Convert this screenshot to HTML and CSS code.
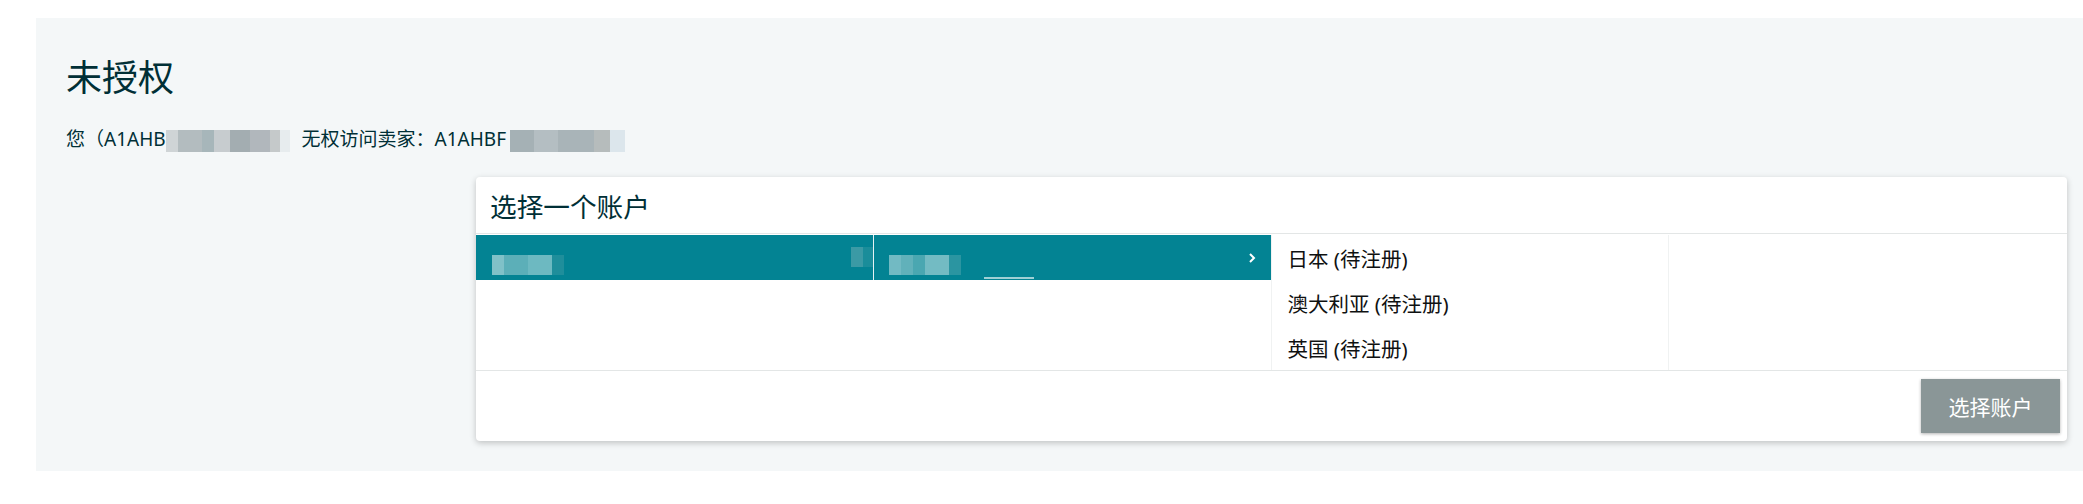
FILE: index.html
```html
<!DOCTYPE html>
<html lang="zh-CN">
<head>
    <meta charset="UTF-8">
    <meta name="viewport" content="width=device-width, initial-scale=1.0">
    <title>未授权</title>
    <link rel="stylesheet" href="styles.css">
</head>
<body>

    <div class="page">
        <h1 class="page-title">未授权</h1>
        <p class="page-desc">您（A1AHB<span class="blur blur-id"></span>无权访问卖家：A1AHBF<span class="blur blur-seller"></span></p>

        <div class="picker">
            <div class="picker-header">选择一个账户</div>

            <div class="picker-body">
                <div class="picker-col first">
                    <div class="picker-item selected">
                        <span class="blur-teal blur-account"></span>
                        <span class="blur-teal blur-edge"></span>
                    </div>
                </div>
                <div class="picker-col">
                    <div class="picker-item selected">
                        <span class="blur-teal blur-region"></span>
                        <span class="blur-line"></span>
                        <svg class="chevron" width="8" height="12" viewBox="0 0 8 12">
                            <polyline points="2,2 6,6 2,10" fill="none" stroke="#fff" stroke-width="2"/>
                        </svg>
                    </div>
                </div>
                <div class="picker-col">
                    <div class="picker-item">日本 (待注册)</div>
                    <div class="picker-item">澳大利亚 (待注册)</div>
                    <div class="picker-item">英国 (待注册)</div>
                </div>
                <div class="picker-col"></div>
            </div>

            <div class="picker-footer">
                <button class="select-button">选择账户</button>
            </div>
        </div>
    </div>

</body>
</html>
```

FILE: styles.css
```css
body {
    font-family: "Noto Sans", "Noto Sans CJK SC", sans-serif;
    margin: 0;
    padding: 0;
    background-color: #fff;
    color: #002f36;
}

.page {
    background-color: #f4f7f8;
    margin: 18px 0 0 36px;
    padding: 38px 16px 30px 30px;
}

.page-title {
    margin: 0;
    font-size: 36px;
    line-height: 44px;
    font-weight: 400;
    color: #002f36;
}

.page-desc {
    margin: 26px 0 0;
    font-size: 19px;
    line-height: 26px;
    color: #002f36;
    display: flex;
    align-items: center;
}

/* pixelated blur over account ids */
.blur {
    display: inline-block;
    height: 22px;
    margin-top: 4px;
}

.blur-id {
    width: 124px;
    margin-right: 12px;
    background: linear-gradient(90deg, #cfd4d6 0 12px, #b3bcbf 12px 36px, #a7b6ba 36px 48px, #c7cccf 48px 64px, #a3adb1 64px 84px, #b1b7bc 84px 104px, #c5c9ca 104px 114px, #e7ecee 114px 124px);
}

.blur-seller {
    width: 115px;
    margin-left: 4px;
    background: linear-gradient(90deg, #a5b1b5 0 24px, #b4bec2 24px 48px, #a9b4b8 48px 84px, #b6bcbc 84px 100px, #dce6ec 100px 115px);
}

.picker {
    margin: 25px 0 0 410px;
    background-color: #fff;
    border-radius: 4px;
    box-shadow: 0 2px 6px rgba(0, 0, 0, 0.22);
}

.picker-header {
    height: 56px;
    display: flex;
    align-items: center;
    padding-left: 14px;
    font-size: 26.67px;
    color: #002f36;
    border-bottom: 1px solid #e3e6e6;
}

.picker-body {
    display: grid;
    grid-template-columns: repeat(4, 1fr);
    height: 135px;
    margin-top: 1px;
    border-bottom: 1px solid #e3e6e6;
}

.picker-col {
    border-right: 1px solid #f0f2f2;
}

.picker-col.first {
    border-right: none;
}

.picker-col.first .picker-item {
    border-right: 1px solid #e6f2f3;
}

.picker-col:last-child {
    border-right: none;
}

.picker-item {
    height: 45px;
    display: flex;
    align-items: center;
    padding: 0 13px 0 16px;
    font-size: 20.5px;
    color: #0f1111;
}

.picker-item.selected {
    background-color: #038393;
    position: relative;
}

.chevron {
    margin-left: auto;
    margin-right: 2px;
}

.blur-teal {
    display: inline-block;
    height: 20px;
    margin-top: 14px;
}

.blur-account {
    width: 72px;
    background: linear-gradient(90deg, #80c1c8 0 12px, #5cafb8 12px 36px, #6db9c1 36px 60px, #1f8e9b 60px 72px);
}

.blur-edge {
    position: absolute;
    right: 0;
    top: 0;
    width: 22px;
    margin-top: 12px;
    background: linear-gradient(90deg, #3b9aa5 0 12px, #1a8d9a 12px 22px);
}

.blur-region {
    width: 72px;
    margin-left: -1px;
    background: linear-gradient(90deg, #72bac3 0 12px, #61b1ba 12px 24px, #4aa7b1 24px 36px, #73bbc3 36px 60px, #2b95a1 60px 72px);
}

.blur-line {
    position: absolute;
    left: 110px;
    bottom: 1px;
    width: 50px;
    height: 2px;
    background-color: #9fd0d5;
}

.picker-footer {
    display: flex;
    justify-content: flex-end;
    padding: 8px 7px 8px 0;
}

.select-button {
    width: 139px;
    height: 54px;
    border: none;
    background-color: #8a9697;
    color: #fff;
    font-family: "Noto Sans", "Noto Sans CJK SC", sans-serif;
    font-size: 21px;
    box-shadow: 0 1px 3px rgba(0, 0, 0, 0.3);
    cursor: pointer;
}
```
